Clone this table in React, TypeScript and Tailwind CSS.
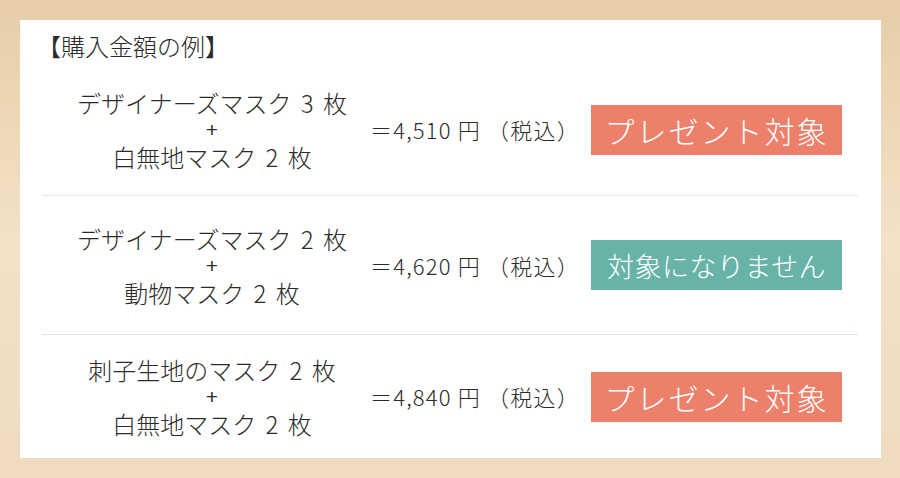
import React from 'react';

interface Example {
  items: [string, string];
  price: string;
  eligible: boolean;
  height: string;
}

const examples: Example[] = [
  { items: ['デザイナーズマスク 3 枚', '白無地マスク 2 枚'], price: '4,510', eligible: true, height: 'h-[131px]' },
  { items: ['デザイナーズマスク 2 枚', '動物マスク 2 枚'], price: '4,620', eligible: false, height: 'h-[138px]' },
  { items: ['刺子生地のマスク 2 枚', '白無地マスク 2 枚'], price: '4,840', eligible: true, height: 'h-[123px]' },
];

function Badge({ eligible }: { eligible: boolean }) {
  if (eligible) {
    return (
      <div className="w-[251px] h-[50px] bg-[#ec806b] text-white flex items-center justify-center text-[30px] tracking-[2px] leading-none font-light">
        プレゼント対象
      </div>
    );
  }
  return (
    <div className="w-[251px] h-[50px] bg-[#67b3a8] text-white flex items-center justify-center text-[27px] tracking-[0.5px] leading-none font-light">
      対象になりません
    </div>
  );
}

function ExampleRow({ example }: { example: Example }) {
  return (
    <div className={`flex items-center ${example.height}`}>
      <div className="w-[300px] ml-[20px] flex flex-col items-center text-[24px] leading-[27px] [word-spacing:4px] font-light">
        <span>{example.items[0]}</span>
        <span className="text-[21px] leading-[27px] font-['Liberation_Sans'] font-normal">+</span>
        <span>{example.items[1]}</span>
      </div>
      <div className="w-[221px] ml-[8px] text-[22px] tracking-[1.2px] whitespace-nowrap font-light">
        ＝{example.price} 円 （税込）
      </div>
      <Badge eligible={example.eligible} />
    </div>
  );
}

export default function App() {
  return (
    <div
      className="w-[900px] h-[478px] bg-gradient-to-b from-[#e7cda8] via-[#f3e2c6] to-[#eedbc0] pt-[20px] pl-[20px] pr-[19px] pb-[20px] text-[#2b2b2b]"
      style={{ fontFamily: '"Noto Sans CJK JP", "Noto Sans", sans-serif' }}
    >
      <div className="w-full h-full bg-white pl-[22px] pr-[23px] flex flex-col">
        <div className="h-[44px] pt-[12px] text-[24px] leading-[28px] -ml-[5px] font-light">【購入金額の例】</div>
        <ExampleRow example={examples[0]} />
        <div className="h-px bg-[#f0e2d6]" />
        <ExampleRow example={examples[1]} />
        <div className="h-px bg-[#f0e2d6]" />
        <ExampleRow example={examples[2]} />
      </div>
    </div>
  );
}
